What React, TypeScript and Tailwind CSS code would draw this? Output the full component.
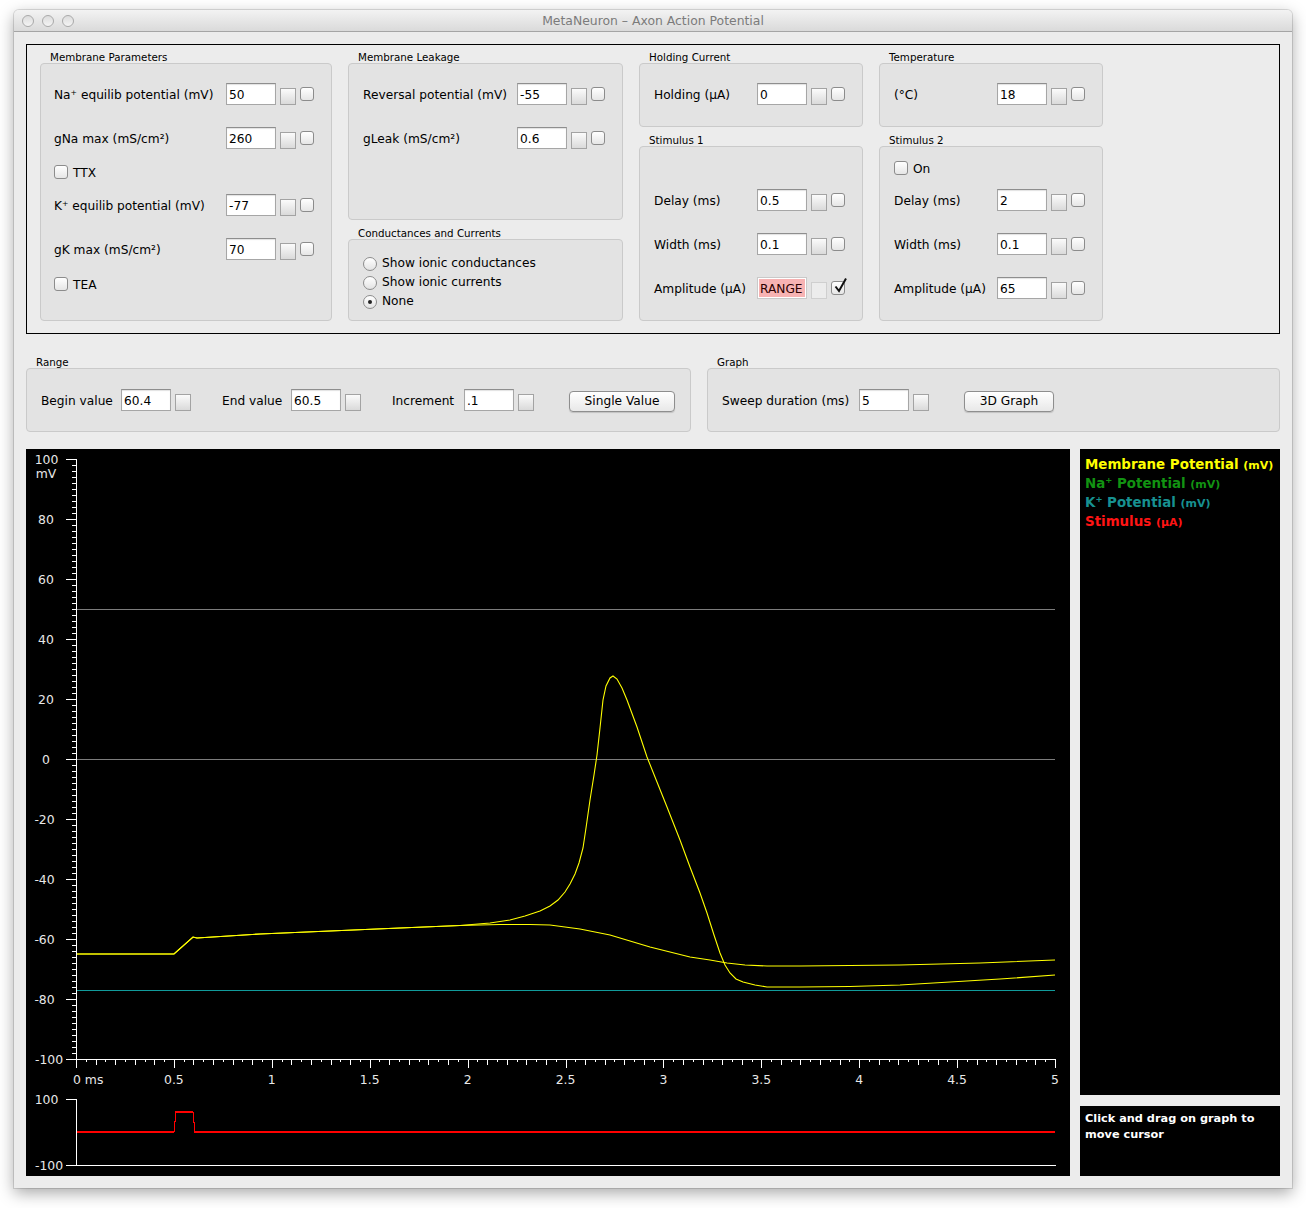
import React from "react";

const Inp = ({ v, pink }: { v: string; pink?: boolean }) =>
  pink ? (
    <div className="h-[22px] w-[50px] border border-[#c9c9c9] bg-white p-[1px]">
      <div className="h-full w-full bg-[#f7b3b3] pl-[1px] pt-[1px] text-[12.2px] leading-[19px] text-[#2a0000]">{v}</div>
    </div>
  ) : (
    <div className="h-[22px] w-[50px] border border-[#a6a6a6] border-t-[#8e8e8e] bg-white pl-[2px] pt-[1px] text-[12.2px] leading-[20px] text-black shadow-[inset_0_1px_1px_rgba(0,0,0,0.12)]">
      {v}
    </div>
  );

const Sq = ({ dis }: { dis?: boolean }) =>
  dis ? (
    <div className="ml-[4px] mt-[5px] h-[17px] w-[16px] border border-[#cfcfcf] bg-[#ececec]" />
  ) : (
    <div className="ml-[4px] mt-[5px] h-[17px] w-[16px] border border-[#a3a3a3] bg-linear-to-b from-[#fbfbfb] to-[#dadada]" />
  );

const Chk = ({ checked, cls = "ml-[4px]" }: { checked?: boolean; cls?: string }) => (
  <div className={`relative h-[14px] w-[14px] rounded-[3px] border border-[#8c8c8c] bg-linear-to-b from-white to-[#e6e6e6] ${cls}`}>
    {checked && (
      <svg className="absolute left-[1px] top-[-5px]" width="15" height="17" viewBox="0 0 15 17">
        <path d="M2.5 9.5 L6 14 L13 1.5" stroke="#111" strokeWidth="2" fill="none" />
      </svg>
    )}
  </div>
);

const Row = ({
  label,
  v,
  lw,
  mt,
  pink,
  checked,
}: {
  label: React.ReactNode;
  v: string;
  lw: string;
  mt: string;
  pink?: boolean;
  checked?: boolean;
}) => (
  <div className={`flex h-[22px] items-center ${mt}`}>
    <div className={`${lw} pt-[2px] text-[12.2px] text-black`}>{label}</div>
    <Inp v={v} pink={pink} />
    <Sq dis={pink} />
    <Chk checked={checked} />
  </div>
);

const CheckRow = ({ label, mt }: { label: string; mt: string }) => (
  <div className={`flex h-[22px] items-center ${mt}`}>
    <Chk cls="" />
    <span className="ml-[5px] pt-[2px] text-[12.2px] text-black">{label}</span>
  </div>
);

const Radio = ({ label, on }: { label: string; on?: boolean }) => (
  <div className="flex h-[19px] items-center">
    <div className="flex h-[14px] w-[14px] items-center justify-center rounded-full border border-[#8c8c8c] bg-linear-to-b from-white to-[#e3e3e3]">
      {on && <div className="h-[4px] w-[4px] rounded-full bg-[#222]" />}
    </div>
    <span className="ml-[5px] text-[12.2px] text-black">{label}</span>
  </div>
);

const Title = ({ t }: { t: string }) => (
  <div className="h-[12px] pl-[10px] text-[10.3px] leading-[12px] text-black">{t}</div>
);

const boxBase = "rounded-[4px] border border-[#cacaca] bg-[#e3e3e3]";

const MacBtn = ({ t, w }: { t: string; w: string }) => (
  <div
    className={`flex h-[21px] ${w} items-center justify-center rounded-[4px] border border-[#8e8e8e] bg-linear-to-b from-white to-[#e8e8e8] text-[12.2px] text-black shadow-[0_1px_1px_rgba(0,0,0,0.15)]`}
  >
    {t}
  </div>
);

const X0 = 50;
const PX = 195.8;

const apPts =
  "77,954 174,954 193,937 197,938 260,934 330,931 400,928 460,925.5 490,923 510,920 525,916 540,911 550,906 558,900 565,892 570,884 575,874 579,863 583,848 586,828 590,800 594,775 597,755 600,728 603,700 606,686 610,678 613,676 617,679 622,688 627,700 637,727 647,757 657,782 667,807 680,840 690,867 700,893 707,913 714,935 720,953 725,965 730,973 736,979 743,982 755,985 767,987 800,987 850,986.5 900,985 950,982 1000,979 1055,975";
const subPts =
  "77,954 174,954 193,937 197,938 260,934 330,931 400,928 460,925.5 500,924.5 530,924.5 550,925 580,929 610,935 630,941 650,947 670,952 690,957 710,960 727,963 745,965 767,966 800,966 900,965 980,963 1055,960";
const stimPts = "77,1132 174,1132 176,1112 193,1112 195,1132 1055,1132";

function Graph() {
  const yt: React.ReactNode[] = [];
  for (let v = -100; v <= 100; v += 2) {
    const y = 310 - 3 * v + 0.5;
    const major = v % 20 === 0;
    yt.push(<line key={"y" + v} x1={major ? 40 : 45.5} x2={50} y1={y} y2={y} />);
  }
  const xt: React.ReactNode[] = [];
  for (let i = 0; i <= 100; i++) {
    const x = Math.round(X0 + i * PX * 0.05) + 0.5;
    const len = i % 10 === 0 ? 9 : i % 2 === 0 ? 6 : 3;
    xt.push(<line key={"x" + i} x1={x} x2={x} y1={610} y2={610 + len} />);
  }
  const yl: { v: number; x: number }[] = [
    { v: 100, x: 20.5 },
    { v: 80, x: 20 },
    { v: 60, x: 20 },
    { v: 40, x: 20 },
    { v: 20, x: 20 },
    { v: 0, x: 20 },
    { v: -20, x: 18.5 },
    { v: -40, x: 18.5 },
    { v: -60, x: 18.5 },
    { v: -80, x: 18.5 },
    { v: -100, x: 23 },
  ];
  const xl = ["0", "0.5", "1", "1.5", "2", "2.5", "3", "3.5", "4", "4.5", "5"];
  return (
    <svg width="1044" height="727" viewBox="0 0 1044 727" className="block">
      <g stroke="#ffffff" strokeWidth="1" shapeRendering="crispEdges">
        <line x1="50.5" x2="50.5" y1="10" y2="611" />
        <line x1="50" x2="1030" y1="610.5" y2="610.5" />
        {yt}
        {xt}
        <line x1="50.5" x2="50.5" y1="650" y2="717" />
        <line x1="50" x2="1030" y1="716.5" y2="716.5" />
        <line x1="40" x2="50" y1="650.5" y2="650.5" />
        <line x1="40" x2="50" y1="716.5" y2="716.5" />
      </g>
      <g shapeRendering="crispEdges" strokeWidth="1">
        <line x1="51" x2="1029" y1="160.5" y2="160.5" stroke="#7c7c7c" />
        <line x1="51" x2="1029" y1="310.5" y2="310.5" stroke="#7c7c7c" />
        <line x1="51" x2="1029" y1="541.5" y2="541.5" stroke="#119b9b" />
      </g>
      <g fill="#e8e8e8" fontFamily="DejaVu Sans, sans-serif" fontSize="12.4">
        {yl.map((l) => (
          <text key={l.v} x={l.x} y={310 - 3 * l.v + 4.5} textAnchor="middle">
            {l.v === 0 ? "0" : l.v < 0 ? "-" + Math.abs(l.v) : String(l.v)}
          </text>
        ))}
        <text x="20" y="28.5" textAnchor="middle">mV</text>
        {xl.map((t, i) => (
          <text key={t} x={i === 0 ? 47 : X0 + i * 0.5 * PX} y="634.5" textAnchor={i === 0 ? "start" : "middle"}>
            {i === 0 ? "0  ms" : t}
          </text>
        ))}
        <text x="20.5" y="654.5" textAnchor="middle">100</text>
        <text x="23" y="720.5" textAnchor="middle">-100</text>
      </g>
      <g transform="translate(-26,-449)" fill="none" strokeWidth="1.1">
        <polyline points={subPts} stroke="#ffff00" />
        <polyline points={apPts} stroke="#ffff00" />
        <polyline points={stimPts} stroke="#ff0000" shapeRendering="crispEdges" />
      </g>
    </svg>
  );
}

export default function App() {
  return (
    <div className="h-[1208px] w-[1306px] bg-white pl-[14px] pt-[10px] font-['DejaVu_Sans',sans-serif]">
      <div className="h-[1178px] w-[1278px] overflow-hidden rounded-t-[5px] bg-[#ececec] shadow-[0_5px_16px_rgba(0,0,0,0.35),0_0_0_1px_rgba(0,0,0,0.12)]">
        {/* title bar */}
        <div className="relative flex h-[22px] items-center border-b border-[#a5a5a5] bg-linear-to-b from-[#f3f3f3] to-[#dadada]">
          <div className="flex gap-[8px] pl-[8px]">
            <div className="h-[12px] w-[12px] rounded-full border border-[#a9a9a9] bg-linear-to-b from-[#dcdcdc] to-[#f4f4f4]" />
            <div className="h-[12px] w-[12px] rounded-full border border-[#a9a9a9] bg-linear-to-b from-[#dcdcdc] to-[#f4f4f4]" />
            <div className="h-[12px] w-[12px] rounded-full border border-[#a9a9a9] bg-linear-to-b from-[#dcdcdc] to-[#f4f4f4]" />
          </div>
          <div className="absolute inset-0 flex items-center justify-center pt-[2px] text-[12.4px] text-[#7b7b7b]">
            MetaNeuron – Axon Action Potential
          </div>
        </div>

        <div className="px-[12px] pt-[12px]">
          {/* top panel */}
          <div className="flex h-[290px] gap-[16px] border border-black pl-[13px] pt-[6px]">
            {/* col 1 */}
            <div className="w-[292px]">
              <Title t="Membrane Parameters" />
              <div className={`${boxBase} h-[258px] pl-[13px]`}>
                <Row lw="w-[172px]" mt="mt-[19px]" label="Na⁺ equilib potential (mV)" v="50" />
                <Row lw="w-[172px]" mt="mt-[22px]" label="gNa max (mS/cm²)" v="260" />
                <CheckRow label="TTX" mt="mt-[12px]" />
                <Row lw="w-[172px]" mt="mt-[11px]" label="K⁺ equilib potential (mV)" v="-77" />
                <Row lw="w-[172px]" mt="mt-[22px]" label="gK max (mS/cm²)" v="70" />
                <CheckRow label="TEA" mt="mt-[13px]" />
              </div>
            </div>
            {/* col 2 */}
            <div className="w-[275px]">
              <Title t="Membrane Leakage" />
              <div className={`${boxBase} h-[157px] pl-[14px]`}>
                <Row lw="w-[154px]" mt="mt-[19px]" label="Reversal potential (mV)" v="-55" />
                <Row lw="w-[154px]" mt="mt-[22px]" label="gLeak (mS/cm²)" v="0.6" />
              </div>
              <div className="mt-[7px]">
                <Title t="Conductances and Currents" />
              </div>
              <div className={`${boxBase} h-[82px] pl-[14px] pt-[14px]`}>
                <Radio label="Show ionic conductances" />
                <Radio label="Show ionic currents" />
                <Radio label="None" on />
              </div>
            </div>
            {/* col 3 */}
            <div className="w-[224px]">
              <Title t="Holding Current" />
              <div className={`${boxBase} h-[64px] pl-[14px]`}>
                <Row lw="w-[103px]" mt="mt-[19px]" label="Holding (µA)" v="0" />
              </div>
              <div className="mt-[7px]">
                <Title t="Stimulus 1" />
              </div>
              <div className={`${boxBase} h-[175px] pl-[14px]`}>
                <Row lw="w-[103px]" mt="mt-[42px]" label="Delay (ms)" v="0.5" />
                <Row lw="w-[103px]" mt="mt-[22px]" label="Width (ms)" v="0.1" />
                <Row lw="w-[103px]" mt="mt-[22px]" label="Amplitude (µA)" v="RANGE" pink checked />
              </div>
            </div>
            {/* col 4 */}
            <div className="w-[224px]">
              <Title t="Temperature" />
              <div className={`${boxBase} h-[64px] pl-[14px]`}>
                <Row lw="w-[103px]" mt="mt-[19px]" label="(°C)" v="18" />
              </div>
              <div className="mt-[7px]">
                <Title t="Stimulus 2" />
              </div>
              <div className={`${boxBase} h-[175px] pl-[14px]`}>
                <CheckRow label="On" mt="mt-[10px]" />
                <Row lw="w-[103px]" mt="mt-[10px]" label="Delay (ms)" v="2" />
                <Row lw="w-[103px]" mt="mt-[22px]" label="Width (ms)" v="0.1" />
                <Row lw="w-[103px]" mt="mt-[22px]" label="Amplitude (µA)" v="65" />
              </div>
            </div>
          </div>

          {/* range / graph row */}
          <div className="mt-[22px] flex gap-[16px]">
            <div className="w-[665px]">
              <Title t="Range" />
              <div className={`${boxBase} flex h-[64px] items-center pl-[14px]`}>
                <div className="w-[80px] pt-[2px] text-[12.2px] text-black">Begin value</div>
                <Inp v="60.4" />
                <Sq />
                <div className="ml-[31px] w-[69px] pt-[2px] text-[12.2px] text-black">End value</div>
                <Inp v="60.5" />
                <Sq />
                <div className="ml-[31px] w-[72px] pt-[2px] text-[12.2px] text-black">Increment</div>
                <Inp v=".1" />
                <Sq />
                <div className="ml-[35px] pt-[2px]">
                  <MacBtn t="Single Value" w="w-[106px]" />
                </div>
              </div>
            </div>
            <div className="w-[573px]">
              <Title t="Graph" />
              <div className={`${boxBase} flex h-[64px] items-center pl-[14px]`}>
                <div className="w-[137px] pt-[2px] text-[12.2px] text-black">Sweep duration (ms)</div>
                <Inp v="5" />
                <Sq />
                <div className="ml-[35px] pt-[2px]">
                  <MacBtn t="3D Graph" w="w-[90px]" />
                </div>
              </div>
            </div>
          </div>

          {/* graph area */}
          <div className="mt-[17px] flex gap-[10px]">
            <div className="h-[727px] w-[1044px] bg-black">
              <Graph />
            </div>
            <div className="flex w-[200px] flex-col gap-[11px]">
              <div className="h-[646px] bg-black pl-[5px] pt-[6px] font-bold">
                <div className="h-[19px] text-[13.4px] leading-[19px] text-[#ffff00]">
                  Membrane Potential <span className="text-[11px] leading-[19px]">(mV)</span>
                </div>
                <div className="h-[19px] text-[13.4px] leading-[19px] text-[#129312]">
                  Na⁺ Potential <span className="text-[11px] leading-[19px]">(mV)</span>
                </div>
                <div className="h-[19px] text-[13.4px] leading-[19px] text-[#179191]">
                  K⁺ Potential <span className="text-[11px] leading-[19px]">(mV)</span>
                </div>
                <div className="h-[19px] text-[13.4px] leading-[19px] text-[#ff1414]">
                  Stimulus <span className="text-[11px] leading-[19px]">(µA)</span>
                </div>
              </div>
              <div className="h-[70px] bg-black pl-[5px] pr-[4px] pt-[5px] text-[11.3px] font-bold leading-[16px] text-white">
                Click and drag on graph to move cursor
              </div>
            </div>
          </div>
        </div>
      </div>
    </div>
  );
}
